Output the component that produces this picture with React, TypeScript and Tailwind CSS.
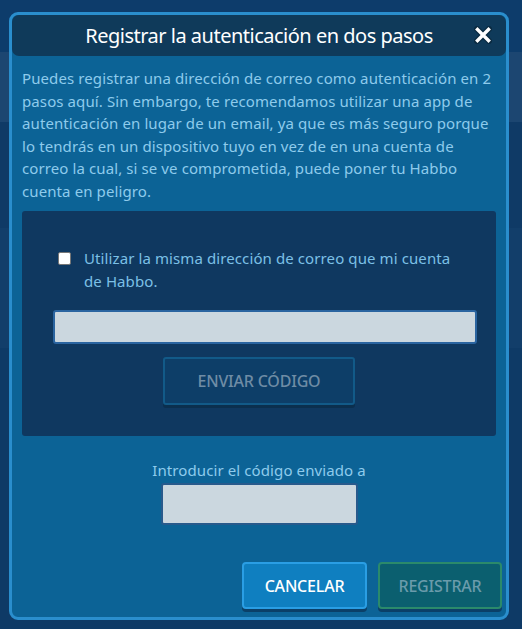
import { useState } from "react";

export default function App() {
  const [sameEmail, setSameEmail] = useState(false);
  const [email, setEmail] = useState("");
  const [code, setCode] = useState("");

  return (
    <div
      className="relative h-[629px] w-[522px] overflow-hidden bg-[#0e3a66]"
      style={{ fontFamily: '"Noto Sans", "Open Sans", sans-serif' }}
    >
      {/* Faded page behind the overlay */}
      <div className="h-[52px] bg-[#0d3c6b]" />
      <div className="h-[70px] bg-[#1c4671]" />
      <div className="h-[106px] bg-[#0f3a66]" />
      <div className="h-[120px] bg-[#123e6a]" />

      {/* Modal */}
      <div className="absolute left-[9px] top-[12px] flex h-[608px] w-[500px] flex-col rounded-[9px] border-[3px] border-[#2a8ecd] bg-[#0c6396]">
        {/* Header */}
        <div className="relative flex h-[41px] items-center justify-center rounded-[7px] bg-[#0f3a5a]">
          <h1 className="text-[20px] tracking-[-0.5px] text-white">
            Registrar la autenticación en dos pasos
          </h1>
          <button className="absolute right-[14px] top-[11px] text-white" aria-label="Cerrar">
            <svg width="18" height="18" viewBox="0 0 18 18">
              <path d="M3 3 L15 15 M15 3 L3 15" stroke="#0a2a40" strokeWidth="6" strokeLinecap="round" />
              <path d="M3.5 3.5 L14.5 14.5 M14.5 3.5 L3.5 14.5" stroke="white" strokeWidth="3.4" strokeLinecap="square" />
            </svg>
          </button>
        </div>

        {/* Body */}
        <div className="flex flex-1 flex-col px-[10px]">
          <p className="mt-[11px] text-[15px] leading-[22.5px] tracking-[0.1px] text-[#8ecbec]">
            Puedes registrar una dirección de correo como autenticación en 2 pasos aquí. Sin embargo, te
            recomendamos utilizar una app de autenticación en lugar de un email, ya que es más seguro porque
            lo tendrás en un dispositivo tuyo en vez de en una cuenta de correo la cual, si se ve
            comprometida, puede poner tu Habbo cuenta en peligro.
          </p>

          {/* Email panel */}
          <div className="mt-[9px] flex h-[225px] flex-col rounded-[3px] bg-[#0f3860] pt-[36px]">
            <label className="ml-[31px] mr-[40px] flex items-start gap-[13px] text-[15px] leading-[23px] tracking-[0.1px] text-[#7cc0e6]">
              <input
                type="checkbox"
                checked={sameEmail}
                onChange={(e) => setSameEmail(e.target.checked)}
                className="mt-[5px] ml-[5px] h-[13px] w-[13px] shrink-0 appearance-none rounded-[2px] border border-[#767676] bg-white"
              />
              <span>Utilizar la misma dirección de correo que mi cuenta de Habbo.</span>
            </label>

            <input
              type="text"
              value={email}
              onChange={(e) => setEmail(e.target.value)}
              className="mt-[17px] ml-[31px] mr-[19px] h-[34px] rounded-[3px] border-[2px] border-[#2a64a0] bg-[#cbd7df] px-2 outline-none"
            />

            <div className="mt-[13px] flex justify-center">
              <button className="h-[48px] w-[192px] rounded-[3px] border-[2px] border-[#125a88] bg-[#0d3e68] text-[16px] font-medium tracking-[-0.2px] text-[#6f8ca5] shadow-[0_3px_0_#0b2f4e]">
                ENVIAR CÓDIGO
              </button>
            </div>
          </div>

          {/* Code entry */}
          <div className="mt-[23px] flex flex-col items-center">
            <span className="text-[15px] leading-[22px] tracking-[0.1px] text-[#8ecbec]">
              Introducir el código enviado a
            </span>
            <input
              type="text"
              value={code}
              onChange={(e) => setCode(e.target.value)}
              className="mt-[2px] h-[42px] w-[197px] rounded-[3px] border-[2px] border-[#285a8c] bg-[#cbd7df] px-2 outline-none"
            />
          </div>

          {/* Footer buttons */}
          <div className="mt-auto mb-[8px] flex justify-end gap-[11px]">
            <button className="h-[47px] w-[125px] rounded-[4px] border-[2px] border-[#2a9ee4] bg-[#0f7fc0] text-[16px] font-medium tracking-[-0.2px] text-white shadow-[0_3px_0_#0b4068]">
              CANCELAR
            </button>
            <button className="-mr-[6px] h-[47px] w-[124px] rounded-[4px] border-[2px] border-[#2b8a6b] bg-[#0b5f6f] text-[16px] font-medium tracking-[-0.2px] text-[#6a9bab] shadow-[0_3px_0_#0b4068]">
              REGISTRAR
            </button>
          </div>
        </div>
      </div>
    </div>
  );
}
